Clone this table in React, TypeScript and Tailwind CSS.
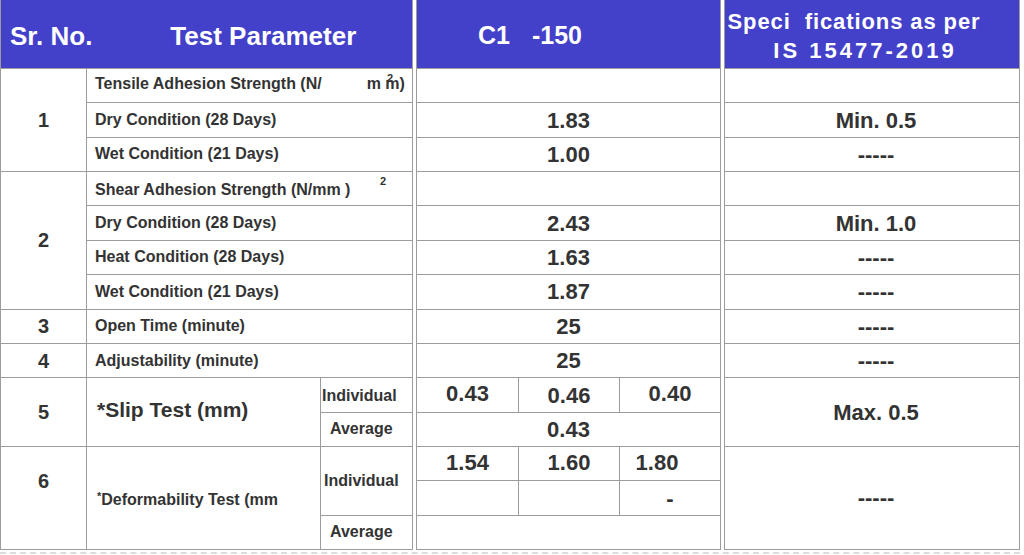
import React from 'react';

const font = "font-['Liberation_Sans',Arial,sans-serif]";
const cell = 'bg-white flex items-center text-[#333] font-bold';
const param = `${cell} col-start-2 col-span-2 pl-[8px] text-[16px]`;
const sr = `${cell} col-start-1 justify-center text-[20px]`;
const val = `${cell} justify-center text-[22px]`;

const rowStart = [
  '', 'row-start-1', 'row-start-2', 'row-start-3', 'row-start-4', 'row-start-5', 'row-start-6', 'row-start-7',
  'row-start-8', 'row-start-9', 'row-start-10', 'row-start-11', 'row-start-12', 'row-start-13', 'row-start-14', 'row-start-15',
];

const grid = 'grid h-[550px] grid-rows-[68px_repeat(14,minmax(0,1fr))] gap-px bg-[#9c9c9c] px-px pb-px';

const ParamRows = () => {
  const rows: [number, string][] = [
    [3, 'Dry Condition (28 Days)'],
    [4, 'Wet Condition (21 Days)'],
    [6, 'Dry Condition (28 Days)'],
    [7, 'Heat Condition (28 Days)'],
    [8, 'Wet Condition (21 Days)'],
    [9, 'Open Time (minute)'],
    [10, 'Adjustability (minute)'],
  ];
  return (
    <>
      {rows.map(([r, text]) => (
        <div key={r} className={`${param} ${rowStart[r]}`}>
          {text}
        </div>
      ))}
    </>
  );
};

const TestTable = () => (
  <div className={`${grid} w-[413px] grid-cols-[85px_233px_91px]`}>
    <div className="col-span-3 row-start-1 col-start-1 flex items-center bg-[#4340c9] pl-[9px] pt-[4px] text-[26px] font-bold text-white">
      <span>Sr. No.</span>
      <span className="ml-[78px]">Test Parameter</span>
    </div>

    <div className={`${sr} row-start-2 row-span-3`}>1</div>
    <div className={`${param} row-start-2 relative`}>
      <span className="pb-[3px]">Tensile Adhesion Strength (N/</span>
      <span className="ml-[45px] pb-[3px]">m m)</span>
      <span className="absolute left-[300px] top-[1px] text-[11px]">2</span>
    </div>

    <div className={`${sr} row-start-5 row-span-4`}>2</div>
    <div className={`${param} row-start-5 relative`}>
      <span className="pt-[2px]">Shear Adhesion Strength (N/mm )</span>
      <span className="absolute left-[293px] top-[1px] text-[11px]">2</span>
    </div>
    <ParamRows />

    <div className={`${sr} row-start-9`}>3</div>
    <div className={`${sr} row-start-10`}>4</div>

    <div className={`${sr} row-start-11 row-span-2`}>5</div>
    <div className={`${cell} col-start-2 row-start-11 row-span-2 pl-[10px] pb-[4px] text-[21px]`}>*Slip Test (mm)</div>
    <div className={`${cell} col-start-3 row-start-11 pl-[1px] pt-[2px] text-[16px]`}>Individual</div>
    <div className={`${cell} col-start-3 row-start-12 pl-[9px] text-[16px]`}>Average</div>

    <div className={`${cell} col-start-1 row-start-13 row-span-3 items-start justify-center pt-[19px] text-[20px]`}>6</div>
    <div className={`${cell} col-start-2 row-start-13 row-span-3 pl-[10px] pt-[4px] text-[16px]`}>
      <span className="relative -top-[4px] text-[11px]">*</span>
      <span>Deformability Test (mm</span>
    </div>
    <div className={`${cell} col-start-3 row-start-13 row-span-2 pl-[3px] text-[16px]`}>Individual</div>
    <div className={`${cell} col-start-3 row-start-15 pl-[9px] text-[16px]`}>Average</div>
  </div>
);

const single: [number, string][] = [
  [2, ''],
  [3, '1.83'],
  [4, '1.00'],
  [5, ''],
  [6, '2.43'],
  [7, '1.63'],
  [8, '1.87'],
  [9, '25'],
  [10, '25'],
];

const ResultTable = () => (
  <div className={`${grid} w-[305px] grid-cols-[101px_100px_100px]`}>
    <div className="col-span-3 row-start-1 col-start-1 flex items-center bg-[#4340c9] pl-[61px] pt-[4px] text-[25px] font-bold text-white">
      <span>C1</span>
      <span className="ml-[22px]">-150</span>
    </div>
    {single.map(([r, v]) => (
      <div key={r} className={`${val} col-start-1 col-span-3 ${rowStart[r]}`}>{v}</div>
    ))}
    <div className={`${val} col-start-1 row-start-11 pb-[3px]`}>0.43</div>
    <div className={`${val} col-start-2 row-start-11 pt-[1px]`}>0.46</div>
    <div className={`${val} col-start-3 row-start-11 pb-[3px]`}>0.40</div>
    <div className={`${val} col-start-1 col-span-3 row-start-12`}>0.43</div>
    <div className={`${val} col-start-1 row-start-13 pb-[3px]`}>1.54</div>
    <div className={`${val} col-start-2 row-start-13 pb-[3px]`}>1.60</div>
    <div className={`${val} col-start-3 row-start-13 pr-[26px] pb-[2px]`}>1.80</div>
    <div className={`${val} col-start-1 row-start-14`}></div>
    <div className={`${val} col-start-2 row-start-14`}></div>
    <div className={`${val} col-start-3 row-start-14 pt-[2px]`}>-</div>
    <div className={`${val} col-start-1 col-span-3 row-start-15`}></div>
  </div>
);

const specs: [number, string][] = [
  [2, ''],
  [3, 'Min. 0.5'],
  [4, '-----'],
  [5, ''],
  [6, 'Min. 1.0'],
  [7, '-----'],
  [8, '-----'],
  [9, '-----'],
  [10, '-----'],
];

const SpecTable = () => (
  <div className={`${grid} w-[296px] grid-cols-[294px]`}>
    <div className="row-start-1 col-start-1 flex flex-col items-center justify-center bg-[#4340c9] pt-[4px] text-[22px] font-bold leading-[29px] text-white">
      <span className="pr-[36px] tracking-[0.9px]">Speci&nbsp; fications as per</span>
      <span className="pr-[14px] tracking-[3px]">IS 15477-2019</span>
    </div>
    {specs.map(([r, v]) => (
      <div key={r} className={`${val} col-start-1 pl-[8px] ${rowStart[r]}`}>{v}</div>
    ))}
    <div className={`${val} col-start-1 row-start-11 row-span-2 pl-[8px]`}>Max. 0.5</div>
    <div className={`${val} col-start-1 row-start-13 row-span-3 pl-[8px]`}>-----</div>
  </div>
);

const App = () => {
  return (
    <div className={`${font} h-[555px] w-[1024px] overflow-hidden bg-white`}>
      <div className="flex gap-[3px]">
        <TestTable />
        <ResultTable />
        <SpecTable />
      </div>
      <div className="mt-[2px] w-[1020px] border-t-2 border-dashed border-[#dcdcdc]" />
    </div>
  );
};

export default App;
